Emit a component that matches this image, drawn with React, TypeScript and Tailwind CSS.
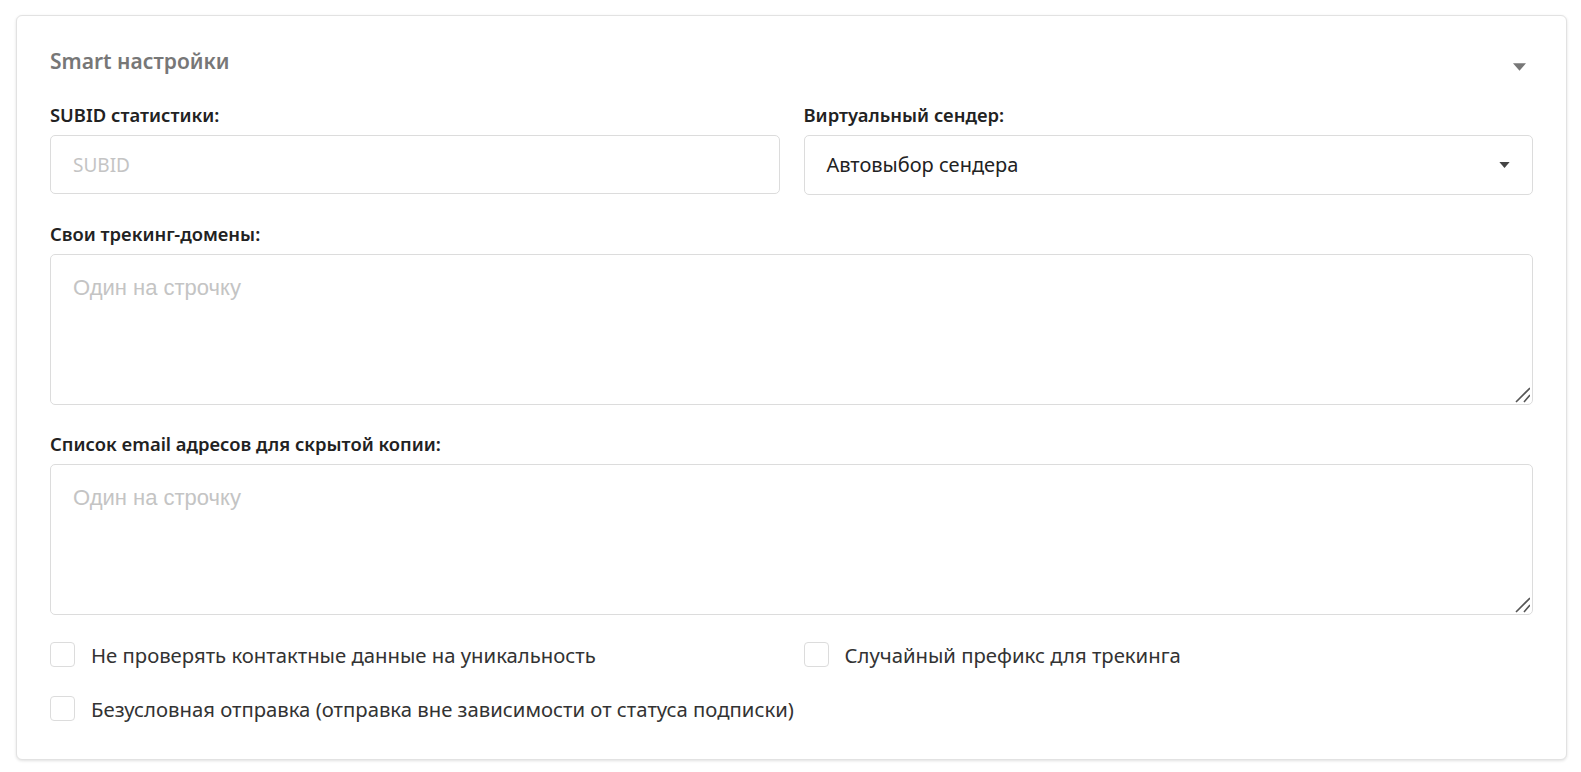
import React from "react";

const Caret = ({ className }: { className?: string }) => (
  <svg className={className} viewBox="0 0 12 7" fill="currentColor">
    <path d="M0 0h12L6 7z" />
  </svg>
);

const Checkbox = ({ label, className }: { label: string; className?: string }) => (
  <label className={`flex items-center gap-4 cursor-pointer ${className ?? ""}`}>
    <span className="w-[25px] h-[25px] shrink-0 rounded-[4px] border border-[#dcdcdc] bg-white" />
    <span className="text-[20.3px] leading-6 text-[#333] whitespace-nowrap">{label}</span>
  </label>
);

const FieldLabel = ({ children }: { children: React.ReactNode }) => (
  <div className="text-[18.4px] leading-6 font-semibold text-[#222] mb-2">{children}</div>
);

const Textarea = () => (
  <div className="relative">
    <textarea
      placeholder="Один на строчку"
      className="block w-full h-[151px] resize-none rounded-[5px] border border-[#dcdcdc] px-[22px] pt-5 pb-4 text-[22px] leading-[26px] outline-none placeholder:text-[#c4c4c4]"
      style={{ fontFamily: '"Liberation Sans", Arial, sans-serif' }}
    />
    <svg className="absolute right-[3px] bottom-[2px] w-[15px] h-[16px] pointer-events-none" viewBox="0 0 15 16">
      <path d="M1 15L15 1M9 15L15 8" stroke="#555" strokeWidth="1.6" />
    </svg>
  </div>
);

export default function App() {
  return (
    <div
      className="min-h-screen bg-white pt-[15px] pl-4 pr-[14px] pb-[15px]"
      style={{ fontFamily: '"Noto Sans", "Open Sans", sans-serif' }}
    >
      <div className="rounded-md border border-[#e2e2e2] bg-white shadow-[0_1px_3px_rgba(0,0,0,0.12)] px-[33px] pt-8 pb-[38px]">
        <div className="flex items-center justify-between h-7">
          <h2 className="text-[21px] font-semibold text-[#777]">Smart настройки</h2>
          <Caret className="w-[13px] h-2 text-[#777] mr-[7px] mt-[10px]" />
        </div>

        <div className="grid grid-cols-2 gap-6 mt-[27px]">
          <div>
            <FieldLabel>SUBID статистики:</FieldLabel>
            <input
              type="text"
              placeholder="SUBID"
              className="w-full h-[59px] rounded-[5px] border border-[#dcdcdc] px-[22px] text-[19px] outline-none placeholder:text-[#c4c4c4]"
            />
          </div>
          <div>
            <FieldLabel>Виртуальный сендер:</FieldLabel>
            <div className="flex items-center justify-between h-[60px] rounded-[5px] border border-[#dcdcdc] pl-[22px] pr-[22px]">
              <span className="text-[20px] text-[#222]">Автовыбор сендера</span>
              <Caret className="w-[11px] h-[6px] text-[#444]" />
            </div>
          </div>
        </div>

        <div className="mt-[27px]">
          <FieldLabel>Свои трекинг-домены:</FieldLabel>
          <Textarea />
        </div>

        <div className="mt-[27px]">
          <FieldLabel>Список email адресов для скрытой копии:</FieldLabel>
          <Textarea />
        </div>

        <div className="grid grid-cols-2 gap-x-6 gap-y-[29px] mt-[27px]">
          <Checkbox label="Не проверять контактные данные на уникальность" />
          <Checkbox label="Случайный префикс для трекинга" />
          <Checkbox className="col-span-2" label="Безусловная отправка (отправка вне зависимости от статуса подписки)" />
        </div>
      </div>
    </div>
  );
}
